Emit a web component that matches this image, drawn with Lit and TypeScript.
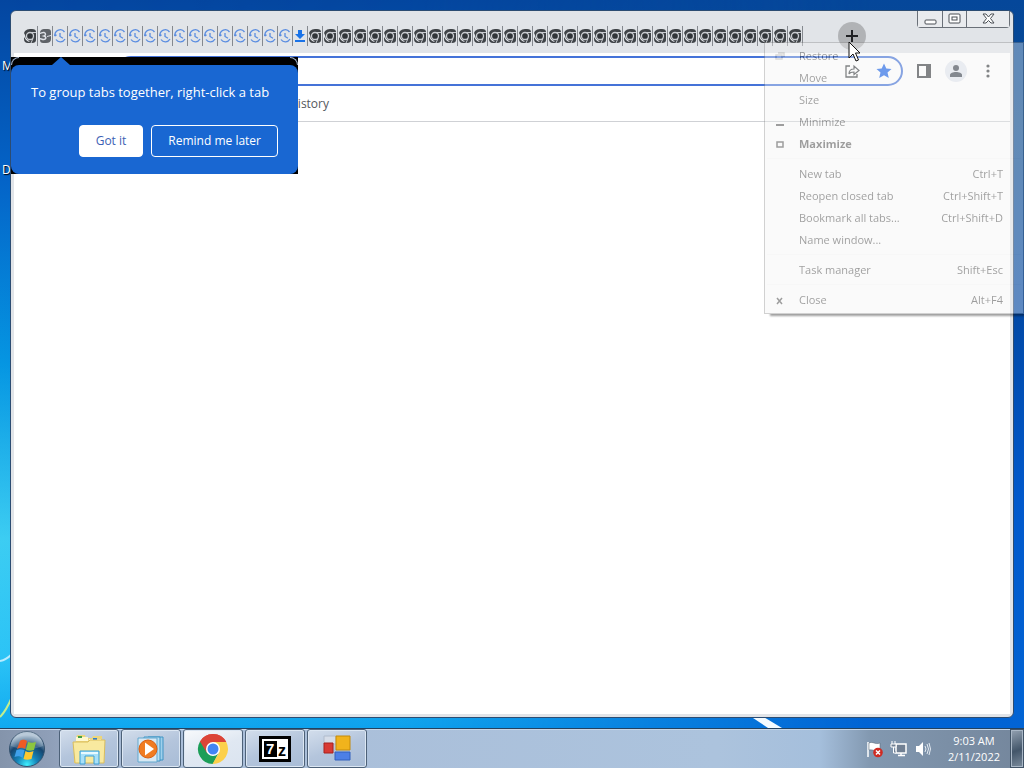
import { LitElement, html, css, svg } from 'lit';
import { customElement, property } from 'lit/decorators.js';

type TabKind = 'chrome' | 'loading' | 'history' | 'download';

interface MenuEntry {
  label: string;
  shortcut?: string;
  mark?: 'restore' | 'minimize' | 'maximize' | 'close';
  strong?: boolean;
}

const TABS: TabKind[] = [
  'chrome',
  'loading',
  ...Array<TabKind>(16).fill('history'),
  'download',
  ...Array<TabKind>(33).fill('chrome'),
];

const MENU: MenuEntry[][] = [
  [
    { label: 'Restore', mark: 'restore' },
    { label: 'Move' },
    { label: 'Size' },
    { label: 'Minimize', mark: 'minimize' },
    { label: 'Maximize', mark: 'maximize', strong: true },
  ],
  [
    { label: 'New tab', shortcut: 'Ctrl+T' },
    { label: 'Reopen closed tab', shortcut: 'Ctrl+Shift+T' },
    { label: 'Bookmark all tabs...', shortcut: 'Ctrl+Shift+D' },
    { label: 'Name window...' },
  ],
  [{ label: 'Task manager', shortcut: 'Shift+Esc' }],
  [{ label: 'Close', shortcut: 'Alt+F4', mark: 'close' }],
];

const FAVICONS = {
  chrome: svg`
    <path d="M1 3Q3 1 6 1h2q4 0 4 3v8q0 3-4 3H4q-4 0-4-4V9l2 3q2 2 4 2l-2-2Q1 10 1 7L0 5z" fill="#3f4347"></path>
    <circle cx="6" cy="8" r="3.500" fill="#303438" stroke="#c9ccd1" stroke-width="1.300"></circle>
    <path d="M6 4.500h6M9 10.500L7 15" fill="none" stroke="#c9ccd1" stroke-width="1"></path>`,
  loading: svg`
    <path d="M1 4Q2 1 5 1h4q3 0 3 3v7q0 4-5 4H4q-3 0-3-3z" fill="#5f6368"></path>
    <path d="M0 5.500c2.500 0 3-1.500 5-1s2 3 0 3.500c3 1 2 4-1 3.500-1.500-.500-2-1-4-.500" fill="none" stroke="#dee1e6" stroke-width="1.500"></path>
    <path d="M8 8.500l4-1" stroke="#dee1e6"></path>`,
  history: svg`
    <path d="M10.500 4A5.300 5.500 0 0 0 1 8M1 8L0 6.500M1 8l1.500-1.200M2 11.500a5.300 5.500 0 0 0 9-.500" fill="none" stroke="#5b8de0" stroke-width="1.300"></path>
    <path d="M6 5v3.500l3 1.800" fill="none" stroke="#5b8de0" stroke-width="1.300"></path>`,
  download: svg`
    <path d="M4 2h4v4h3L6 11 1 6h3z" fill="#1a73e8"></path>
    <path d="M1 12h10v2H1z" fill="#1a73e8"></path>`,
};

/** Row of tiny, fully squeezed tabs */
@customElement('tab-strip')
export class TabStrip extends LitElement {
  static styles = css`
    :host {
      display: flex;
    }

    .tab {
      display: flex;
      align-items: center;
      width: 15px;
      height: 20px;
      padding: 0 0 0 1px;
      border: 0;
      border-right: 1px solid #85898f;
      background: none;
      box-sizing: border-box;
    }

    svg {
      width: 12px;
      height: 16px;
      flex-shrink: 0;
    }
  `;

  @property({ attribute: false })
  tabs: TabKind[] = [];

  render() {
    return this.tabs.map(
      (kind) => html`
        <button class="tab" aria-label="${kind} tab">
          <svg viewBox="0 0 12 16">${FAVICONS[kind]}</svg>
        </button>
      `
    );
  }
}

/** Fading system menu of the browser window */
@customElement('window-menu')
export class WindowMenu extends LitElement {
  static styles = css`
    :host {
      display: block;
      box-sizing: border-box;
      padding: 2px;
      border: 1px solid #888;
      background: #f3f3f3;
      box-shadow: 4px 4px 2px -2px #000;
      color: #000;
      font: 11px/22px 'Open Sans', 'Noto Sans', sans-serif;
      opacity: 0.38;
    }

    .group + .group {
      margin-top: 3px;
      padding-top: 4px;
      border-top: 1px solid #ebebeb;
    }

    .item {
      display: flex;
      align-items: center;
      width: 100%;
      height: 22px;
      padding: 0 18px 0 8px;
      border: 0;
      background: none;
      color: inherit;
      font: inherit;
      text-align: left;
    }

    .item.strong {
      font-weight: 700;
    }

    .mark {
      width: 10px;
      height: 10px;
      margin-right: 14px;
    }

    .label {
      flex: 1;
    }
  `;

  private renderMark(mark?: MenuEntry['mark']) {
    switch (mark) {
      case 'restore':
        return svg`<path d="M3 2h6v4M1 4h6v4H1z" fill="none" stroke="#9a9a9a" stroke-width="1.500"></path>`;
      case 'minimize':
        return svg`<path d="M1 8h8" stroke="#000" stroke-width="2"></path>`;
      case 'maximize':
        return svg`<path d="M2 3h6v5H2z" fill="none" stroke="#000" stroke-width="1.500"></path>`;
      case 'close':
        return svg`<path d="M2 3l5 6M7 3L2 9" stroke="#000" stroke-width="1.500"></path>`;
      default:
        return '';
    }
  }

  render() {
    return MENU.map(
      (group) => html`
        <div class="group">
          ${group.map(
            (item) => html`
              <button class="item ${item.strong ? 'strong' : ''}">
                <svg class="mark" viewBox="0 0 10 10">${this.renderMark(item.mark)}</svg>
                <span class="label">${item.label}</span>
                <span>${item.shortcut ?? ''}</span>
              </button>
            `
          )}
        </div>
      `
    );
  }
}

/** Promo bubble about tab groups */
@customElement('tab-bubble')
export class TabBubble extends LitElement {
  static styles = css`
    :host {
      display: block;
      padding-top: 8px;
      background: #000;
      font: 12px/20px 'Open Sans', 'Noto Sans', sans-serif;
    }

    .arrow {
      position: absolute;
      top: 0;
      left: 41px;
      width: 18px;
      height: 8px;
    }

    .outline {
      position: absolute;
      inset: 0;
      border: 1px solid #9fb0c8;
      border-bottom-width: 0;
      border-radius: 8px;
      clip-path: polygon(0 0, 8px 0, 8px 8px, calc(100% - 8px) 8px, calc(100% - 8px) 0, 100% 0, 100% 8px, 0 8px);
    }

    .body {
      padding: 17px 20px 17px;
      border-radius: 8px;
      background: #1967d2;
      color: #fff;
    }

    .message {
      margin: 0 0 23px;
      font-size: 13px;
      white-space: nowrap;
    }

    .actions {
      display: flex;
      justify-content: flex-end;
      gap: 8px;
    }

    .action {
      height: 32px;
      padding: 0 16px;
      border: 1px solid #fff;
      border-radius: 4px;
      background: none;
      color: #fff;
      font: inherit;
    }

    .action.primary {
      background: #fff;
      color: #3c61b4;
    }
  `;

  render() {
    return html`
      <div class="outline"></div>
      <svg class="arrow" viewBox="0 0 18 8"><path d="M0 8L9 0l9 8z" fill="#1967d2"></path></svg>
      <div class="body">
        <p class="message">To group tabs together, right-click a tab</p>
        <div class="actions">
          <button class="action primary">Got it</button>
          <button class="action">Remind me later</button>
        </div>
      </div>
    `;
  }
}

@customElement('task-bar')
export class TaskBar extends LitElement {
  static styles = css`
    :host {
      display: flex;
      height: 39px;
      border-top: 1px solid #24425f;
      box-shadow: inset 0 1px 0 #c6d6e8;
      background: linear-gradient(90deg, #8494ab 0, #8f9fb8 50px, #a9bdd8 130px, #acc3dd 70%, #a5bfdc 80%, #8298b0 85%, #74869c 100%);
      font: 11px/16px 'Open Sans', 'Noto Sans', sans-serif;
      color: #fff;
    }

    .start {
      width: 40px;
      margin: 0 12px 0 7px;
      padding: 0;
      border: 0;
      background: none;
    }

    .apps {
      display: flex;
      flex: 1;
      gap: 2px;
    }

    .app {
      width: 60px;
      height: 39px;
      padding: 0;
      box-sizing: border-box;
      border: 1px solid #4d6178;
      border-radius: 3px;
      box-shadow: inset 0 0 0 1px #dce7f3;
      background: linear-gradient(160deg, #d3deec, #b4c5dc 50%, #a8bcd6);
    }

    .app.active {
      background: linear-gradient(160deg, #f8fafc, #e0e8f2 50%, #dbe4f0);
    }

    svg {
      display: block;
      margin: 0 auto;
    }

    .tray {
      display: flex;
      align-items: center;
      gap: 6px;
      padding-right: 16px;
    }

    .clock {
      padding: 4px 10px 0 0;
      text-align: center;
    }

    .peek {
      width: 14px;
      padding: 0;
      border: 1px solid #415366;
      box-shadow: inset 0 0 0 1px #a9b7c6;
      background: linear-gradient(160deg, #94a2b2, #43566a 55%, #7b8b9c);
    }
  `;

  render() {
    return html`
      <button class="start" aria-label="Start">
        <svg width="40" height="38" viewBox="0 0 40 38">
          <defs>
            <radialGradient id="orb" cx="50%" cy="95%" r="85%">
              <stop offset="0" stop-color="#3ff0ff"></stop>
              <stop offset="0.350" stop-color="#1583b8"></stop>
              <stop offset="0.700" stop-color="#16456f"></stop>
              <stop offset="1" stop-color="#a8bdd0"></stop>
            </radialGradient>
          </defs>
          <circle cx="20" cy="19" r="17.500" fill="url(#orb)" stroke="#34526e"></circle>
          <path d="M4 16a16 15 0 0 1 32 0c-8 4-24 4-32 0z" fill="#fff" opacity="0.200"></path>
          <path d="M13 11c3-2 5-1 7 0l-2 8c-3-2-5-1-8 0z" fill="#ef5a24"></path>
          <path d="M21 12c3 1 5 1 8 0l-2 8c-3 1-5 1-8 0z" fill="#8cc63f"></path>
          <path d="M9.500 20c3-1 5-1 8 0l-2 8c-2-2-5-2-8-1z" fill="#3fa0ea"></path>
          <path d="M18.500 21c3 2 5 1 8 0l-2 8c-3 1-6 1-8 0z" fill="#fdc82f"></path>
        </svg>
      </button>
      <div class="apps">
        <button class="app" aria-label="Windows Explorer">
          <svg width="36" height="32" viewBox="0 0 36 32">
            <path d="M5 5l1-3h8l1 3h6l1-2h9l1 27H3z" fill="#edd67c"></path>
            <path d="M5 4h12v4H5zM18 6h12v4H18z" fill="#fff8cf"></path>
            <path d="M7 3h4v2H7z" fill="#43a047"></path>
            <path d="M22 5h4v2h-4z" fill="#2f7fd0"></path>
            <path d="M2 9h15l2-2h15l-1 23H4z" fill="#f8e99f" stroke="#d9bd5d"></path>
            <path d="M9 31V18h19v13h-5v-8h-9v8z" fill="#a7e0f8" stroke="#3c9fd4"></path>
            <path d="M10 20h17" stroke="#e8faff" stroke-width="2"></path>
          </svg>
        </button>
        <button class="app" aria-label="Media Player">
          <svg width="30" height="30" viewBox="0 0 30 30">
            <path d="M12 3h15v23H12z" fill="#9fd0ec" stroke="#3f94c4"></path>
            <path d="M8 3h16v24H8z" fill="#b9dff3" stroke="#3f94c4"></path>
            <path d="M2 4h19v24H2z" fill="#d8e9f4" stroke="#62a8cf"></path>
            <circle cx="12" cy="15" r="9" fill="#f07c22" stroke="#d95e10"></circle>
            <path d="M9 8.500v13l9-6.500z" fill="#fff"></path>
          </svg>
        </button>
        <button class="app active" aria-label="Google Chrome">
          <svg width="32" height="32" viewBox="0 0 32 32">
            <path d="M16 16L3 8.500A15 15 0 0 1 29 8.500z" fill="#dc4437"></path>
            <path d="M16 16L3 8.500A15 15 0 0 0 16 31l6-12z" fill="#1c9e58"></path>
            <path d="M16 9h13.300A15 15 0 0 1 15.500 31L22 19.500z" fill="#fcd04b"></path>
            <path d="M3 8.500L10 20l6-11h13.300A15 15 0 0 0 3 8.500z" fill="#dc4437"></path>
            <circle cx="16" cy="16" r="7" fill="#fff"></circle>
            <circle cx="16" cy="16" r="5.500" fill="#4285f4"></circle>
          </svg>
        </button>
        <button class="app" aria-label="7-Zip">
          <svg width="32" height="26" viewBox="0 0 32 26">
            <path d="M1.500 1.500h29v23h-29z" fill="#fff" stroke="#000" stroke-width="3"></path>
            <path d="M5 5h13v16H5z"></path>
            <text x="7" y="18" font-size="15" font-weight="700" fill="#fff" font-family="Liberation Sans, sans-serif">7</text>
            <text x="19" y="20" font-size="16" font-weight="700" font-family="Liberation Sans, sans-serif">z</text>
          </svg>
        </button>
        <button class="app" aria-label="Sandbox">
          <svg width="28" height="28" viewBox="0 0 28 28">
            <path d="M1 1h12v8H1z" fill="#d6dde8" stroke="#b0bccc"></path>
            <path d="M13 1h14v14H13z" fill="#f1b31c" stroke="#c48a0a"></path>
            <path d="M1 8h9v10H1z" fill="#d83a34" stroke="#a8211c"></path>
            <path d="M12 17h15v8H12z" fill="#4d7fe6" stroke="#3360bd"></path>
          </svg>
        </button>
      </div>
      <div class="tray">
        <svg width="18" height="18" viewBox="0 0 18 18">
          <path d="M2 2v15" stroke="#fff" stroke-width="1.500"></path>
          <path d="M3 3c4-2 6 2 11 0v7c-5 2-7-1-11 0z" fill="#fff" stroke="#53606e" stroke-width="0.500"></path>
          <circle cx="12" cy="12.500" r="4.800" fill="#cf2b22"></circle>
          <path d="M10 10.500l4 4M14 10.500l-4 4" stroke="#fff" stroke-width="1.500"></path>
        </svg>
        <svg width="18" height="18" viewBox="0 0 18 18">
          <path d="M6 4h10v9H6zM8 15.500h7M11 13v3" fill="#718093" stroke="#fff" stroke-width="1.500"></path>
          <path d="M2 1v3M5 1v3M1 4h5v3H1zM3.500 7v6H6" fill="#718093" stroke="#fff"></path>
        </svg>
        <svg width="18" height="18" viewBox="0 0 18 18">
          <path d="M2 6h3l4-4v14l-4-4H2z" fill="#fff"></path>
          <path d="M11 6q2 3 0 6M13 4q3 5 0 10M15 3q3 6 0 12" fill="none" stroke="#e4ebf2"></path>
        </svg>
      </div>
      <div class="clock">
        <div>9:03 AM</div>
        <div>2/11/2022</div>
      </div>
      <button class="peek" aria-label="Show desktop"></button>
    `;
  }
}

@customElement('app-root')
export class AppRoot extends LitElement {
  static styles = css`
    :host {
      display: flex;
      flex-direction: column;
      min-height: 100vh;
      overflow: hidden;
      font: 12px/16px 'Open Sans', 'Noto Sans', sans-serif;
    }

    .desktop {
      position: relative;
      display: flex;
      flex: 1;
      padding: 10px;
      background: linear-gradient(#05479a, #0a4b90 120px, #0248a4 300px, #0259cc 500px, #0264d4 100%);
    }

    .wallpaper {
      position: absolute;
      inset: 0;
      width: 100%;
      height: 100%;
    }

    .shortcut {
      position: absolute;
      left: 2px;
      color: #fff;
      text-decoration: none;
      text-shadow: 1px 1px 1px #000;
    }

    .shortcut.first {
      top: 58px;
    }

    .shortcut.second {
      top: 162px;
    }

    .window {
      position: relative;
      display: flex;
      flex: 1;
      flex-direction: column;
      border: 1px solid #2c4c72;
      border-radius: 6px;
      padding: 0 3px 3px;
      background: #e1e4e8;
    }

    .titlebar {
      display: flex;
      align-items: flex-start;
      height: 42px;
    }

    tab-strip {
      margin: 15px 0 0 9px;
    }

    .new-tab {
      display: flex;
      align-items: center;
      justify-content: center;
      width: 28px;
      height: 28px;
      margin: 11px 0 0 35px;
      padding: 0;
      border: 0;
      border-radius: 50%;
      background: #b1b3b6;
    }

    .controls {
      display: flex;
      margin-left: auto;
      border: 1px solid #6a7078;
      border-top: 0;
      border-radius: 0 0 4px 4px;
    }

    .control {
      display: flex;
      align-items: center;
      justify-content: center;
      width: 24px;
      height: 16px;
      padding: 0;
      border: 0;
      background: #e9ebee;
    }

    .control + .control {
      border-left: 1px solid #6a7078;
    }

    .control.wide {
      width: 43px;
    }

    .toolbar {
      display: flex;
      align-items: center;
      height: 36px;
      padding: 0 8px;
      background: #fff;
    }

    .nav {
      display: flex;
      width: 94px;
    }

    .omnibox {
      display: flex;
      align-items: center;
      flex: 1;
      gap: 14px;
      height: 26px;
      padding: 0 8px 0 16px;
      border: 2px solid #4573d8;
      border-radius: 15px;
      background: #fff;
    }

    .address {
      flex: 1;
      min-width: 0;
      border: 0;
      outline: 0;
      background: none;
      font: inherit;
    }

    .icon {
      display: flex;
      padding: 0;
      border: 0;
      background: none;
    }

    .actions {
      display: flex;
      align-items: center;
      gap: 12px;
      padding: 0 5px 0 12px;
    }

    .avatar {
      padding: 2px;
      border-radius: 50%;
      background: #e4e8f0;
    }

    .bookmarks {
      display: flex;
      align-items: center;
      justify-content: flex-start;
      height: 30px;
      padding: 0 0 2px 275px;
      border-bottom: 1px solid #cfd1d5;
      background: #fff;
    }

    .bookmark {
      color: #55585d;
      text-decoration: none;
    }

    .page {
      flex: 1;
      background: #fff;
    }

    tab-bubble {
      position: absolute;
      top: 46px;
      left: 0;
      width: 287px;
    }

    window-menu {
      position: absolute;
      top: 42px;
      right: 0;
      width: 260px;
    }

    .cursor {
      position: absolute;
      top: 41px;
      left: 848px;
      z-index: 1;
    }
  `;

  private renderToolbar() {
    return html`
      <div class="toolbar">
        <div class="nav"></div>
        <div class="omnibox">
          <input class="address" type="text" aria-label="Address" />
          <button class="icon" aria-label="Share">
            <svg width="18" height="18" viewBox="0 0 18 18">
              <path d="M7 4H3v11h11v-3" fill="none" stroke="#3c4043" stroke-width="1.300"></path>
              <path d="M6 12c0-4 2-5 5-5V4l5 4.500-5 4V10c-2 0-4 0-5 2z" fill="none" stroke="#3c4043" stroke-width="1.200"></path>
            </svg>
          </button>
          <button class="icon" aria-label="Bookmark this tab">
            <svg width="18" height="18" viewBox="0 0 18 18">
              <path d="M9 1.500l2.300 5 5.200.500-4 3.500 1.300 5.500L9 13.200 4.200 16l1.300-5.500-4-3.500 5.200-.500z" fill="#1a63e8"></path>
            </svg>
          </button>
        </div>
        <div class="actions">
          <button class="icon" aria-label="Side panel">
            <svg width="18" height="18" viewBox="0 0 18 18">
              <path d="M3 3h12v12H3zM12 3v12M13.500 3v12" fill="none" stroke="#3c4043" stroke-width="2"></path>
            </svg>
          </button>
          <button class="icon avatar" aria-label="Profile">
            <svg width="18" height="18" viewBox="0 0 18 18">
              <circle cx="9" cy="6" r="3" fill="#3f4651"></circle>
              <path d="M3 15v-2c0-4 12-4 12 0v2z" fill="#3f4651"></path>
            </svg>
          </button>
          <button class="icon" aria-label="Customize">
            <svg width="18" height="18" viewBox="0 0 18 18">
              <circle cx="9" cy="4" r="1.600" fill="#3c4043"></circle>
              <circle cx="9" cy="9" r="1.600" fill="#3c4043"></circle>
              <circle cx="9" cy="14" r="1.600" fill="#3c4043"></circle>
            </svg>
          </button>
        </div>
      </div>
    `;
  }

  render() {
    return html`
      <main class="desktop">
        <svg class="wallpaper" viewBox="0 0 1024 728" preserveAspectRatio="none">
          <defs>
            <linearGradient id="glow" x1="0" y1="0" x2="0" y2="1">
              <stop offset="0" stop-color="#0446a0"></stop>
              <stop offset="0.250" stop-color="#0464c8"></stop>
              <stop offset="0.500" stop-color="#0596e2"></stop>
              <stop offset="0.740" stop-color="#3ccdf2"></stop>
              <stop offset="0.900" stop-color="#2cc4f6"></stop>
              <stop offset="1" stop-color="#10aaf0"></stop>
            </linearGradient>
            <linearGradient id="fade">
              <stop offset="0" stop-color="#fff"></stop>
              <stop offset="0.400" stop-color="#ddd"></stop>
              <stop offset="0.850" stop-color="#000"></stop>
            </linearGradient>
            <mask id="left"><rect width="1024" height="728" fill="url(#fade)"></rect></mask>
          </defs>
          <rect width="1024" height="728" fill="url(#glow)" mask="url(#left)"></rect>
          <path d="M0 661q6-1 12-7" fill="none" stroke="#b9ecff" stroke-width="2"></path>
          <path d="M0 717q6-6 12-20" fill="none" stroke="#c2ee8e" stroke-width="2"></path>
          <path d="M750 716h12l20 12h-14z" fill="#f4fbff"></path>
        </svg>
        <a class="shortcut first" href="#">M</a>
        <a class="shortcut second" href="#">D</a>
        <section class="window">
          <div class="titlebar">
            <tab-strip .tabs=${TABS}></tab-strip>
            <button class="new-tab" aria-label="New tab">
              <svg width="14" height="14" viewBox="0 0 14 14">
                <path d="M7 1v12M1 7h12" stroke="#202124" stroke-width="2"></path>
              </svg>
            </button>
            <div class="controls">
              <button class="control" aria-label="Minimize">
                <svg width="13" height="12" viewBox="0 0 13 12">
                  <rect x="1" y="7" width="11" height="4" rx="1" fill="#fff" stroke="#4a4f55"></rect>
                </svg>
              </button>
              <button class="control" aria-label="Maximize">
                <svg width="13" height="12" viewBox="0 0 13 12">
                  <rect x="1" y="1" width="11" height="9" rx="1" fill="#fff" stroke="#4a4f55"></rect>
                  <rect x="4" y="4" width="5" height="3" fill="#fff" stroke="#4a4f55"></rect>
                </svg>
              </button>
              <button class="control wide" aria-label="Close">
                <svg width="13" height="12" viewBox="0 0 13 12">
                  <path d="M1 1h3l2.500 3L9 1h3L8.500 5.500 12 10H9L6.500 7.500 4 10H1l3.500-4.500z" fill="#fff" stroke="#4a4f55"></path>
                </svg>
              </button>
            </div>
          </div>
          ${this.renderToolbar()}
          <nav class="bookmarks"><a class="bookmark" href="#">History</a></nav>
          <div class="page"></div>
          <tab-bubble></tab-bubble>
        </section>
        <window-menu></window-menu>
        <svg class="cursor" width="13" height="21" viewBox="0 0 13 21">
          <path d="M1 1v16l4-4 3 7 2.500-1-3-7H12z" fill="#fff" stroke="#111"></path>
        </svg>
      </main>
      <task-bar></task-bar>
    `;
  }
}

declare global {
  interface HTMLElementTagNameMap {
    'app-root': AppRoot;
    'tab-strip': TabStrip;
    'tab-bubble': TabBubble;
    'window-menu': WindowMenu;
    'task-bar': TaskBar;
  }
}
